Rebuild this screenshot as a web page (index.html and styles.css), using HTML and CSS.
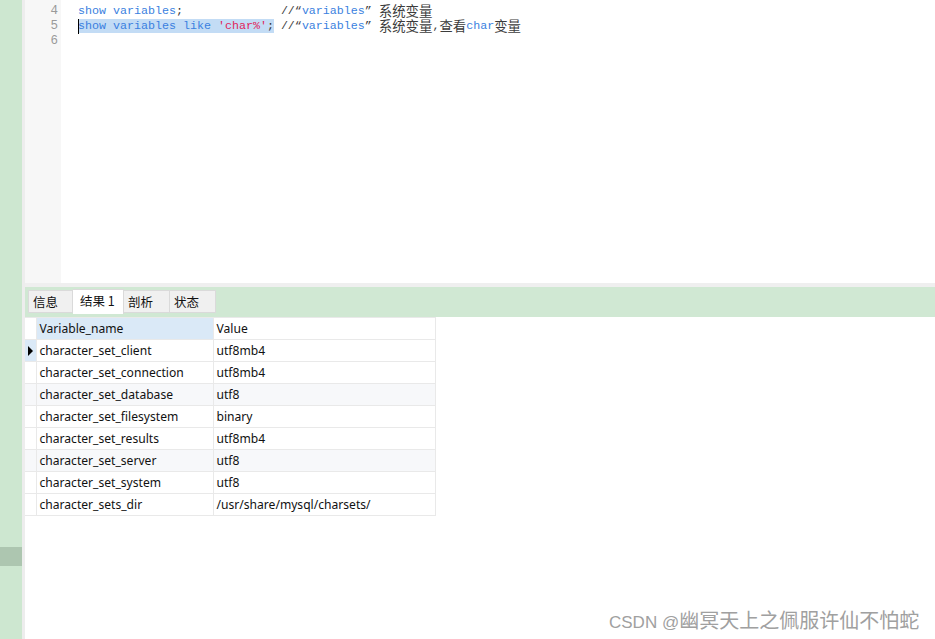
FILE: index.html
```html
<!DOCTYPE html>
<html>
<head>
<meta charset="utf-8">
<link rel="stylesheet" href="styles.css">
</head>
<body>
<div class="sidebar"><div class="mark"></div></div>
<div class="divider"></div>
<div class="main">
  <div class="editor">
    <div class="gutter">
      <div class="ln">4</div>
      <div class="ln">5</div>
      <div class="ln">6</div>
    </div>
    <div class="code">
      <div class="line"><span class="kw">show variables</span>;              <span class="cm">//“<span class="kw">variables</span>” <span class="zh">系统变量</span></span></div>
      <div class="line"><span class="sel"><span class="caret"></span><span class="kw">show variables like </span><span class="str">'char%'</span>;</span> <span class="cm">//“<span class="kw">variables</span>” <span class="zh">系统变量</span>,<span class="zh">查看</span><span class="kw">char</span><span class="zh">变量</span></span></div>
      <div class="line"> </div>
    </div>
  </div>
  <div class="sep"></div>
  <div class="tabbar">
    <div class="tab">信息</div>
    <div class="tab active">结果 1</div>
    <div class="tab">剖析</div>
    <div class="tab">状态</div>
  </div>
  <div class="results">
    <table class="grid">
      <thead>
        <tr><th class="ind"></th><th class="hl">Variable_name</th><th>Value</th></tr>
      </thead>
      <tbody>
        <tr><td class="ind cur"><span class="tri"></span></td><td>character_set_client</td><td>utf8mb4</td></tr>
        <tr><td class="ind"></td><td>character_set_connection</td><td>utf8mb4</td></tr>
        <tr class="alt"><td class="ind"></td><td>character_set_database</td><td>utf8</td></tr>
        <tr><td class="ind"></td><td>character_set_filesystem</td><td>binary</td></tr>
        <tr><td class="ind"></td><td>character_set_results</td><td>utf8mb4</td></tr>
        <tr class="alt"><td class="ind"></td><td>character_set_server</td><td>utf8</td></tr>
        <tr><td class="ind"></td><td>character_set_system</td><td>utf8</td></tr>
        <tr><td class="ind"></td><td>character_sets_dir</td><td>/usr/share/mysql/charsets/</td></tr>
      </tbody>
    </table>
  </div>
</div>
<div class="watermark">CSDN @<span class="wzh">幽冥天上之佩服许仙不怕蛇</span></div>
</body>
</html>
```
FILE: styles.css
```css
html, body {
  margin: 0;
  padding: 0;
}
body {
  width: 935px;
  height: 639px;
  overflow: hidden;
  display: flex;
  position: relative;
  background: #ffffff;
  font-family: "Noto Sans", "Noto Sans CJK SC", sans-serif;
}
.sidebar {
  width: 22px;
  background: #cde7d0;
  padding-top: 547px;
  box-sizing: border-box;
}
.mark {
  height: 19px;
  background: #adc6b0;
}
.divider {
  width: 3px;
  background: #ededed;
}
.main {
  flex: 1;
  display: flex;
  flex-direction: column;
}
.editor {
  height: 283px;
  display: flex;
  background: #ffffff;
}
.gutter {
  width: 36px;
  background: #f7f7f7;
  padding-top: 4px;
  box-sizing: border-box;
}
.ln {
  height: 15px;
  line-height: 15px;
  text-align: right;
  padding-right: 3px;
  font-family: "Liberation Mono", monospace;
  font-size: 12.5px;
  color: #9a9a9a;
}
.code {
  flex: 1;
  padding-top: 4px;
  padding-left: 17px;
}
.line {
  height: 15px;
  line-height: 15px;
  white-space: pre;
  font-family: "Liberation Mono", "Noto Sans CJK SC", monospace;
  font-size: 11.67px;
  color: #333333;
}
.kw { color: #3a7fe0; }
.str { color: #e0245a; }
.cm { color: #3c3c3c; }
.zh {
  display: inline-block;
  vertical-align: top;
  height: 15px;
  line-height: 12px;
  font-family: "Noto Sans CJK SC", sans-serif;
  font-size: 13.4px;
}
.sel {
  background: #c3dcf5;
  position: relative;
}
.caret {
  position: absolute;
  left: 0;
  top: 0;
  width: 1px;
  height: 15px;
  background: #000;
}
.sep {
  height: 4px;
  background: #efefef;
}
.tabbar {
  height: 30px;
  background: #d0e8d3;
  display: flex;
  align-items: flex-start;
  padding-left: 3px;
  padding-top: 3px;
  box-sizing: border-box;
}
.tab {
  height: 23px;
  line-height: 22px;
  box-sizing: border-box;
  background: #f0f0f0;
  border: 1px solid #dadada;
  border-left: none;
  font-family: "Noto Sans CJK SC", sans-serif;
  font-size: 12.5px;
  color: #111;
  padding-left: 4px;
  width: 46px;
}
.tab:first-child { width: 45px; border-left: 1px solid #dadada; }
.tab.active {
  background: #ffffff;
  width: 51px;
  height: 25px;
  margin-top: -1px;
  padding-left: 7px;
  border-bottom: none;
}
.results {
  flex: 1;
  background: #ffffff;
}
.grid {
  border-collapse: collapse;
  font-size: 12.1px;
  color: #111;
  table-layout: fixed;
}
.grid th, .grid td {
  height: 22px;
  padding: 0 0 0 3px;
  border: 1px solid #e9e9e9;
  text-align: left;
  font-weight: normal;
  white-space: nowrap;
  box-sizing: border-box;
}
.grid th:nth-child(2), .grid td:nth-child(2) { width: 177px; }
.grid th:nth-child(3), .grid td:nth-child(3) { width: 222px; }
.grid .ind {
  width: 11px;
  padding: 0;
  border-left: none;
}
.grid th.hl { background: #dae9f7; }
.grid td.cur { background: #dae9f7; }
.tri {
  display: block;
  width: 0;
  height: 0;
  margin-left: 3px;
  border-top: 5px solid transparent;
  border-bottom: 5px solid transparent;
  border-left: 5px solid #000;
}
.grid tr.alt td { background: #f7f8fa; }
.watermark {
  position: absolute;
  left: 609px;
  top: 605px;
  font-family: "Liberation Sans", "Noto Sans CJK SC", sans-serif;
  font-size: 17px;
  color: #a0a0a0;
  white-space: nowrap;
}
.wzh {
  font-family: "Noto Sans CJK SC", sans-serif;
  font-size: 20px;
}
```
